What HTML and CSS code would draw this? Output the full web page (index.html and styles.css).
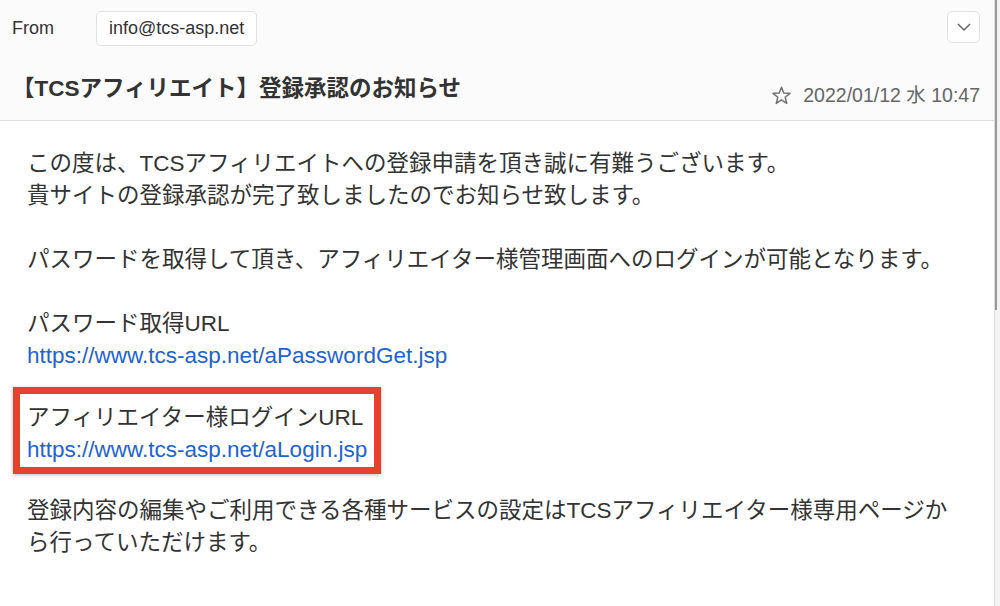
FILE: index.html
```html
<!DOCTYPE html>
<html lang="ja">
<head>
    <meta charset="UTF-8">
    <meta name="viewport" content="width=device-width, initial-scale=1.0">
    <title>【TCSアフィリエイト】登録承認のお知らせ</title>
    <link rel="stylesheet" href="styles.css">
</head>
<body>
    <div class="window">
        <div class="mail">
            <div class="header">
                <div class="from-row">
                    <span class="label">From</span>
                    <span class="addr">info@tcs-asp.net</span>
                    <button class="toggle" aria-label="詳細">
                        <svg width="14" height="8" viewBox="0 0 14 8"><path d="M1 1 L7 7 L13 1" fill="none" stroke="#666" stroke-width="1.5"/></svg>
                    </button>
                </div>
                <div class="subject-row">
                    <h1>【TCSアフィリエイト】登録承認のお知らせ</h1>
                    <div class="meta">
                        <svg class="star" width="21" height="21" viewBox="0 0 24 24"><path d="M12 2.5 L14.6 9.1 L21.7 9.5 L16.2 14 L18 21 L12 17.1 L6 21 L7.8 14 L2.3 9.5 L9.4 9.1 Z" fill="none" stroke="#707070" stroke-width="1.7" stroke-linejoin="round"/></svg>
                        <span class="date">2022/01/12 水 10:47</span>
                    </div>
                </div>
            </div>

            <div class="body">
                <p>この度は、TCSアフィリエイトへの登録申請を頂き誠に有難うございます。<br>貴サイトの登録承認が完了致しましたのでお知らせ致します。</p>
                <p>パスワードを取得して頂き、アフィリエイター様管理画面へのログインが可能となります。</p>
                <p>パスワード取得URL<br><a href="#">https://www.tcs-asp.net/aPasswordGet.jsp</a></p>
                <p class="highlight">アフィリエイター様ログインURL<br><a href="#">https://www.tcs-asp.net/aLogin.jsp</a></p>
                <p>登録内容の編集やご利用できる各種サービスの設定はTCSアフィリエイター様専用ページから行っていただけます。</p>
            </div>
        </div>
        <div class="scrollbar"><div class="thumb"></div></div>
    </div>
</body>
</html>
```

FILE: styles.css
```css
body {
    margin: 0;
    padding: 0;
    background: #fff;
    font-family: 'Liberation Sans', 'Noto Sans CJK JP', sans-serif;
    color: #333;
}
.window {
    display: flex;
    height: 606px;
    overflow: hidden;
}
.mail {
    flex: 1;
}
.header {
    background: #fbfbfb;
    border-bottom: 1px solid #ddd;
}
.from-row {
    display: flex;
    align-items: center;
    padding: 11px 14px 0 12px;
}
.label {
    width: 84px;
    font-size: 18px;
    color: #333;
}
.addr {
    height: 33px;
    line-height: 33px;
    padding: 0 12px;
    border: 1px solid #e2e2e2;
    border-radius: 5px;
    background: #fff;
    font-size: 18px;
}
.toggle {
    margin-left: auto;
    align-self: flex-start;
    width: 33px;
    height: 32px;
    padding: 0;
    border: 1px solid #e2e2e2;
    border-radius: 5px;
    background: #fff;
    display: flex;
    align-items: center;
    justify-content: center;
}
.subject-row {
    display: flex;
    align-items: flex-end;
    padding: 28px 14px 16px 12px;
}
h1 {
    margin: 0;
    font-size: 22.5px;
    line-height: 30px;
    font-weight: bold;
    color: #333;
}
.meta {
    margin-left: auto;
    margin-bottom: -3px;
    display: flex;
    align-items: center;
    gap: 11px;
    color: #666;
    font-size: 19.5px;
    line-height: 24px;
}
.body {
    padding: 27px 35px 0 27px;
    font-size: 22.5px;
    line-height: 32px;
}
.body p {
    margin: 0 0 32px;
}
.body a {
    color: #2163d1;
    text-decoration: none;
}
.body .highlight {
    width: fit-content;
    margin: -17px 0 21px -14px;
    padding: 8px 7px 1px;
    border: 7px solid #e8412b;
    box-shadow: 0 1px 4px rgba(0, 0, 0, 0.25);
}
.scrollbar {
    width: 5px;
    background: #f3f3f3;
    border-left: 1px solid #ddd;
}
.thumb {
    width: 2px;
    height: 310px;
    background: #999;
}
```
